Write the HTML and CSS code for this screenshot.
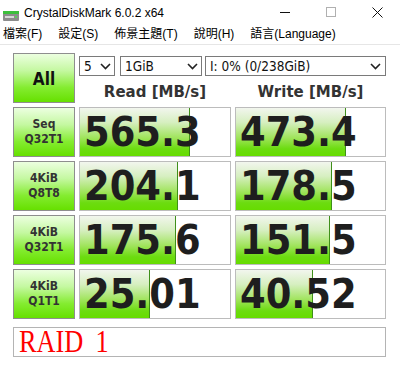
FILE: index.html
```html
<!DOCTYPE html>
<html lang="zh-Hant">

<head>
    <meta charset="utf-8">
    <meta name="viewport" content="width=device-width, initial-scale=1.0">
    <title>CrystalDiskMark 6.0.2 x64</title>
    <link rel="stylesheet" href="styles.css">
</head>

<body>
    <header class="titlebar">
        <svg class="app-icon" width="16" height="10" viewBox="0 0 16 10">
            <rect x="0" y="0" width="16" height="10" rx="1" fill="#8c8c8c"/>
            <rect x="0" y="0" width="16" height="3" fill="#3cbf3c"/>
            <rect x="2" y="5" width="9" height="2" fill="#d8d8d8"/>
            <rect x="12" y="5" width="2" height="2" fill="#5ad05a"/>
        </svg>
        <span class="title">CrystalDiskMark 6.0.2 x64</span>
        <div class="controls">
            <span class="ctl"><svg width="10" height="10" viewBox="0 0 10 10"><line x1="0" y1="5.5" x2="10" y2="5.5" stroke="#111" stroke-width="1"/></svg></span>
            <span class="ctl"><svg width="10" height="10" viewBox="0 0 10 10"><rect x="0.5" y="0.5" width="9" height="9" fill="none" stroke="#b0b0b0" stroke-width="1"/></svg></span>
            <span class="ctl"><svg width="11" height="11" viewBox="0 0 11 11"><path d="M0.5 0.5 L10.5 10.5 M10.5 0.5 L0.5 10.5" stroke="#111" stroke-width="1"/></svg></span>
        </div>
    </header>

    <nav class="menubar">
        <span>檔案(F)</span>
        <span>設定(S)</span>
        <span>佈景主題(T)</span>
        <span>說明(H)</span>
        <span>語言(Language)</span>
    </nav>

    <main class="panel">
        <section class="board">
            <button class="test all">All</button>

            <div class="settings">
                <div class="selects">
                    <div class="pick pick-count">5<svg class="chev" width="11" height="7" viewBox="0 0 11 7"><polyline points="1,1 5.5,5.5 10,1" fill="none" stroke="#222" stroke-width="1.6"/></svg></div>
                    <div class="pick pick-size">1GiB<svg class="chev" width="11" height="7" viewBox="0 0 11 7"><polyline points="1,1 5.5,5.5 10,1" fill="none" stroke="#222" stroke-width="1.6"/></svg></div>
                    <div class="pick pick-drive">I: 0% (0/238GiB)<svg class="chev" width="11" height="7" viewBox="0 0 11 7"><polyline points="1,1 5.5,5.5 10,1" fill="none" stroke="#222" stroke-width="1.6"/></svg></div>
                </div>
                <div class="heads">
                    <div class="head">Read [MB/s]</div>
                    <div class="head">Write [MB/s]</div>
                </div>
            </div>

            <button class="test">Seq<br>Q32T1</button>
            <div class="cell"><div class="bar" style="width: 73.3%"></div><span class="num">565.3</span></div>
            <div class="cell"><div class="bar" style="width: 73.8%"></div><span class="num">473.4</span></div>

            <button class="test">4KiB<br>Q8T8</button>
            <div class="cell"><div class="bar" style="width: 65.3%"></div><span class="num">204.1</span></div>
            <div class="cell"><div class="bar" style="width: 64.4%"></div><span class="num">178.5</span></div>

            <button class="test">4KiB<br>Q32T1</button>
            <div class="cell"><div class="bar" style="width: 64%"></div><span class="num">175.6</span></div>
            <div class="cell"><div class="bar" style="width: 63%"></div><span class="num">151.5</span></div>

            <button class="test">4KiB<br>Q1T1</button>
            <div class="cell"><div class="bar" style="width: 46.7%"></div><span class="num">25.01</span></div>
            <div class="cell"><div class="bar" style="width: 51.7%"></div><span class="num">40.52</span></div>
        </section>

        <div class="comment"><span class="comment-text">RAID 1</span></div>
    </main>
</body>

</html>
```

FILE: styles.css
```css
body {
    margin: 0;
    background-color: #ffffff;
    font-family: "Liberation Sans", "Noto Sans CJK TC", sans-serif;
    color: #000;
}

.titlebar {
    height: 24px;
    display: flex;
    align-items: center;
}

.app-icon {
    margin-left: 3px;
    margin-right: 5px;
    margin-top: 8px;
}

.title {
    font-size: 12px;
    line-height: 24px;
    margin-top: 2px;
}

.controls {
    margin-left: auto;
    display: flex;
    height: 24px;
}

.ctl {
    width: 46px;
    display: flex;
    align-items: center;
    justify-content: center;
}

.menubar {
    height: 20px;
    display: flex;
    gap: 16px;
    padding-left: 3px;
    font-size: 12px;
    line-height: 20px;
    border-bottom: 1px solid #e6e6e6;
}

.panel {
    padding: 8px 14px 0 13px;
}

.board {
    display: grid;
    grid-template-columns: 62px 152px 151px;
    grid-auto-rows: 50px;
    gap: 4px;
}

.test {
    margin: 0;
    padding: 0;
    border: 1px solid #8e8e8e;
    background: linear-gradient(to bottom, #ecffe0 0%, #c4f8a0 35%, #84ec30 70%, #66e000 100%);
    font-family: "DejaVu Sans Condensed", "DejaVu Sans", sans-serif;
    font-stretch: condensed;
    font-weight: bold;
    font-size: 12px;
    line-height: 15px;
    color: #333;
}

.test.all {
    font-size: 17px;
    color: #111;
    padding-top: 3px;
}

.settings {
    grid-column: 2 / 4;
    display: flex;
    flex-direction: column;
}

.selects {
    display: flex;
    margin-top: 3px;
    height: 20px;
}

.pick {
    box-sizing: border-box;
    height: 20px;
    border: 1px solid #7a7a7a;
    background: #fff;
    display: flex;
    align-items: center;
    padding-left: 4px;
    padding-right: 3px;
    font-family: "DejaVu Sans Condensed", "DejaVu Sans", sans-serif;
    font-stretch: condensed;
    font-size: 13.5px;
    color: #111;
}

.chev {
    margin-left: auto;
}

.pick-count {
    width: 36px;
}

.pick-size {
    width: 82px;
    margin-left: 5px;
}

.pick-drive {
    width: 181px;
    margin-left: 3px;
    padding-right: 4px;
}

.heads {
    display: grid;
    grid-template-columns: 152px 151px;
    gap: 4px;
    margin-top: 6px;
}

.head {
    text-align: center;
    font-family: "DejaVu Sans", sans-serif;
    font-weight: bold;
    font-size: 15px;
    line-height: 20px;
    color: #333;
}

.cell {
    position: relative;
    border: 1px solid #bcbcbc;
    background: #fff;
    display: flex;
    align-items: center;
    overflow: hidden;
}

.bar {
    position: absolute;
    left: 0;
    top: 0;
    bottom: 0;
    box-sizing: border-box;
    border-right: 1px solid #3f8f1a;
    background: linear-gradient(to bottom, #f2f6ee 0%, #d6efc0 30%, #a0e45c 62%, #6cdc10 85%, #66dc00 100%);
}

.num {
    position: relative;
    padding-left: 4px;
    font-family: "DejaVu Sans Condensed", "DejaVu Sans", sans-serif;
    font-stretch: condensed;
    font-weight: bold;
    font-size: 41px;
    line-height: 48px;
    color: #1e1e1e;
}

.comment {
    margin-top: 8px;
    height: 28px;
    border: 1px solid #b4b4b4;
    display: flex;
    align-items: center;
    padding-left: 5px;
}

.comment-text {
    display: inline-block;
    font-family: "Liberation Serif", serif;
    font-size: 28px;
    line-height: 28px;
    word-spacing: 6px;
    color: #ff0000;
    transform: scale(0.94, 1.12);
    transform-origin: left center;
}
```
